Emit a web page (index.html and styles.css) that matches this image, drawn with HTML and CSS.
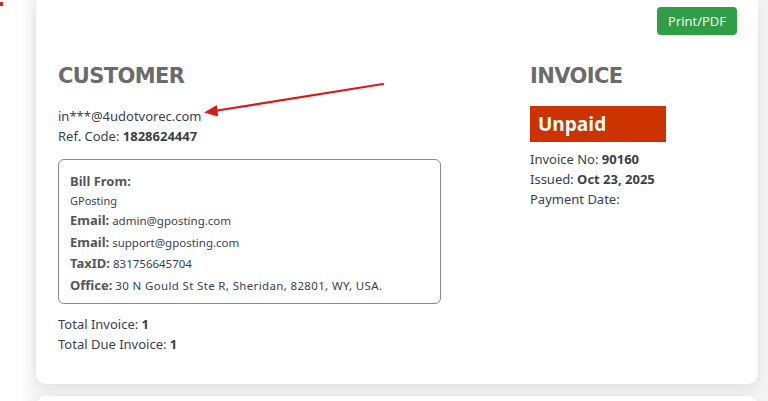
FILE: index.html
```html
<!DOCTYPE html>
<html lang="en">
<head>
  <meta charset="UTF-8">
  <title>Invoice</title>
  <link rel="stylesheet" href="styles.css">
</head>
<body>
  <div class="page">
    <div class="card">
      <div class="toolbar">
        <button class="print-btn">Print/PDF</button>
      </div>
      <div class="columns">
        <div class="customer">
          <h2 class="heading">CUSTOMER</h2>
          <div class="line">in***@4udotvorec.com</div>
          <div class="line">Ref. Code: <b>1828624447</b></div>
          <div class="bill-box">
            <div class="bill-title">Bill From:</div>
            <div class="bill-name">GPosting</div>
            <div class="bill-row"><b>Email:</b> admin@gposting.com</div>
            <div class="bill-row"><b>Email:</b> support@gposting.com</div>
            <div class="bill-row"><b>TaxID:</b> 831756645704</div>
            <div class="bill-row"><b>Office:</b> <span class="small">30 N Gould St Ste R, Sheridan, 82801, WY, USA.</span></div>
          </div>
          <div class="totals">
            <div class="line">Total Invoice: <b>1</b></div>
            <div class="line">Total Due Invoice: <b>1</b></div>
          </div>
        </div>
        <div class="invoice">
          <h2 class="heading">INVOICE</h2>
          <div class="status">Unpaid</div>
          <div class="line">Invoice No: <b>90160</b></div>
          <div class="line">Issued: <b>Oct 23, 2025</b></div>
          <div class="line">Payment Date:</div>
        </div>
      </div>
    </div>
    <div class="card next"></div>
  </div>

  <!-- Annotation arrow -->
  <svg class="arrow" width="768" height="401" viewBox="0 0 768 401">
    <line x1="383" y1="84" x2="214" y2="111" stroke="#d91a1a" stroke-width="2.2" stroke-linecap="round"/>
    <polygon points="204,112.5 217,105 218,116.5" fill="#d91a1a"/>
  </svg>
  <div class="corner-mark"></div>
</body>
</html>
```

FILE: styles.css
```css
/* Base styles */
*, ::before, ::after {
  box-sizing: border-box;
  margin: 0;
  padding: 0;
}
body {
  background-color: #f4f4f4;
  color: #3a414d;
  font-family: 'Noto Sans', 'Open Sans', sans-serif;
  font-size: 13px;
  overflow: hidden;
  height: 401px;
}
b {
  font-weight: 700;
  color: #3a3f47;
}
/* Layout */
.page {
  padding: 0 10px 0 36px;
  background: linear-gradient(to right, #ffffff 0, #ffffff 20px, #f4f4f4 36px);
}
.card {
  background-color: #ffffff;
  border-radius: 0 0 10px 10px;
  box-shadow: 0 4px 14px rgba(0,0,0,0.08);
  padding: 7px 21px 30px 22px;
  height: 384px;
}
.card.next {
  margin-top: 12px;
  height: 40px;
  border-radius: 10px;
}
.toolbar {
  display: flex;
  justify-content: flex-end;
}
.print-btn {
  background-color: #2f9e47;
  color: #ffffff;
  border: none;
  border-radius: 4px;
  font-family: 'Open Sans', sans-serif;
  font-size: 13px;
  width: 80px;
  height: 28px;
}
.columns {
  display: grid;
  grid-template-columns: 383px 1fr;
  column-gap: 89px;
  margin-top: 27px;
}
.heading {
  font-family: 'DejaVu Sans', sans-serif;
  font-weight: 700;
  font-size: 21px;
  letter-spacing: -0.6px;
  line-height: 28px;
  color: #6b6b6b;
  margin-bottom: 16px;
}
.line {
  line-height: 20px;
}
/* Bill from box */
.bill-box {
  border: 1px solid #8a8a8a;
  border-radius: 6px;
  padding: 12px 11px 12px 11px;
  margin-top: 13px;
  height: 145px;
}
.bill-title {
  font-weight: 700;
  line-height: 19px;
  color: #555;
}
.bill-name {
  font-size: 11px;
  line-height: 19px;
}
.bill-row {
  font-size: 11.5px;
  line-height: 20.5px;
}
.bill-row b {
  font-size: 13px;
  color: #555;
}
.small {
  font-size: 11.5px;
  letter-spacing: 0.35px;
}
.totals {
  margin-top: 10px;
}
/* Invoice column */
.status {
  background-color: #cc3300;
  color: #ffffff;
  font-family: 'Open Sans', sans-serif;
  font-weight: 700;
  font-size: 19px;
  line-height: 36px;
  width: 136px;
  padding-left: 8px;
  margin-top: 1px;
  margin-bottom: 7px;
}
/* Overlays */
.arrow {
  position: absolute;
  left: 0;
  top: 0;
  pointer-events: none;
}
.corner-mark {
  position: absolute;
  left: 0;
  top: 2px;
  width: 3px;
  height: 4px;
  background-color: #e02020;
}
```
